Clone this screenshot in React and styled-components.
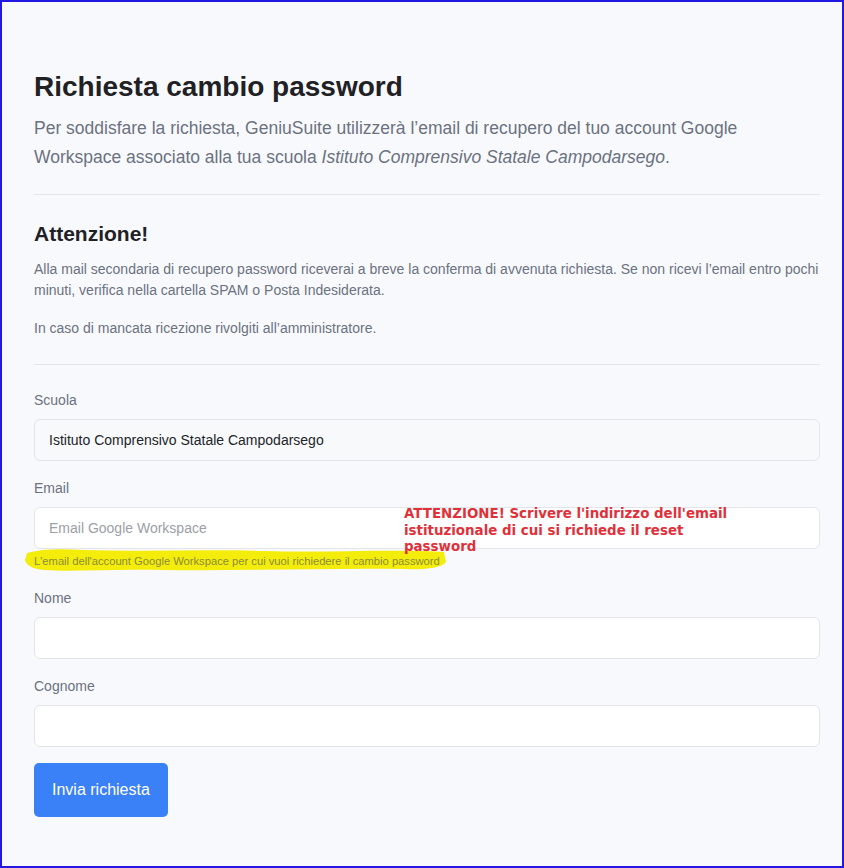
import React from "react";
import styled, { createGlobalStyle } from "styled-components";

const Global = createGlobalStyle`
  html, body { margin: 0; padding: 0; }
  body {
    background: #f8f9fd;
    font-family: "Liberation Sans", Arial, sans-serif;
  }
  * { box-sizing: border-box; }
`;

const Frame = styled.div`
  width: 844px;
  height: 868px;
  border: 2px solid #2317e4;
  background: #f8f9fd;
  padding: 68px 22px 0 32px;
  overflow: hidden;
`;

const Title = styled.h1`
  margin: 0;
  font-size: 28px;
  line-height: 34px;
  font-weight: 700;
  color: #1f2125;
`;

const Lead = styled.p`
  margin: 10px 0 0;
  font-size: 17.5px;
  line-height: 29px;
  color: #6b7280;
`;

const Divider = styled.hr`
  border: 0;
  border-top: 1px solid #e3e5ea;
  margin: ${(p) => p.$top}px 0 ${(p) => p.$bottom}px;
`;

const Heading = styled.h2`
  margin: 0;
  font-size: 21px;
  line-height: 26px;
  font-weight: 700;
  color: #1f2125;
`;

const Note = styled.p`
  margin: ${(p) => p.$top}px 0 0;
  font-size: 14px;
  line-height: 21px;
  color: #6b7280;
`;

const Form = styled.form`
  display: flex;
  flex-direction: column;
`;

const Field = styled.div`
  position: relative;
  display: flex;
  flex-direction: column;
  margin-bottom: ${(p) => p.$gap ?? 17}px;
`;

const Label = styled.label`
  font-size: 14px;
  line-height: 21px;
  color: #6b7280;
  margin-bottom: 8px;
`;

const Input = styled.input`
  width: 100%;
  height: 42px;
  border: 1px solid #e3e5ea;
  border-radius: 6px;
  background: ${(p) => (p.readOnly ? "#f8f9fb" : "#ffffff")};
  padding: 0 14px;
  font-family: "Liberation Sans", Arial, sans-serif;
  font-size: 14px;
  color: #212529;
  outline: none;
  &::placeholder { color: #9ca0a7; }
`;

const Help = styled.div`
  position: relative;
  margin-top: 2px;
  height: 16px;
`;

const HelpText = styled.span`
  position: relative;
  font-size: 11.2px;
  line-height: 16px;
  color: #8a8c3a;
  white-space: nowrap;
`;

const Marker = styled.svg`
  position: absolute;
  left: -10px;
  top: -5px;
  width: 424px;
  height: 27px;
  pointer-events: none;
`;

const Annotation = styled.div`
  position: absolute;
  left: 370px;
  top: 28px;
  width: 350px;
  font-family: "DejaVu Sans", Verdana, sans-serif;
  font-weight: 700;
  font-size: 13.4px;
  line-height: 16.5px;
  color: #e0313b;
  pointer-events: none;
`;

const Button = styled.button`
  align-self: flex-start;
  height: 54px;
  padding: 0 18px;
  border: 0;
  border-radius: 5px;
  background: #3a80f6;
  color: #ffffff;
  font-family: "Liberation Sans", Arial, sans-serif;
  font-size: 16px;
`;

export default function App() {
  return (
    <>
      <Global />
      <Frame>
        <Title>Richiesta cambio password</Title>
        <Lead>
          Per soddisfare la richiesta, GeniuSuite utilizzerà l’email di recupero del tuo account Google
          Workspace associato alla tua scuola <em>Istituto Comprensivo Statale Campodarsego</em>.
        </Lead>
        <Divider $top={22} $bottom={26} />
        <Heading>Attenzione!</Heading>
        <Note $top={12}>
          Alla mail secondaria di recupero password riceverai a breve la conferma di avvenuta richiesta. Se non ricevi l’email entro pochi
          minuti, verifica nella cartella SPAM o Posta Indesiderata.
        </Note>
        <Note $top={17}>In caso di mancata ricezione rivolgiti all’amministratore.</Note>
        <Divider $top={25} $bottom={25} />
        <Form onSubmit={(e) => e.preventDefault()}>
          <Field $gap={17}>
            <Label>Scuola</Label>
            <Input readOnly value="Istituto Comprensivo Statale Campodarsego" />
          </Field>
          <Field $gap={21}>
            <Label>Email</Label>
            <Input placeholder="Email Google Workspace" />
            <Help>
              <Marker viewBox="0 0 424 27" preserveAspectRatio="none">
                <path
                  d="M3 7 C20 2 40 3 60 4 C120 6 180 3 240 5 C300 7 360 3 420 6 L422 16 C418 22 400 24 380 23 C300 22 220 25 140 24 C90 23 50 26 20 24 C8 23 2 19 1 14 Z"
                  fill="#f4ec0b"
                />
              </Marker>
              <HelpText>L'email dell'account Google Workspace per cui vuoi richiedere il cambio password</HelpText>
            </Help>
            <Annotation>
              ATTENZIONE! Scrivere l'indirizzo dell'email istituzionale di cui si richiede il reset password
            </Annotation>
          </Field>
          <Field $gap={17}>
            <Label>Nome</Label>
            <Input />
          </Field>
          <Field $gap={16}>
            <Label>Cognome</Label>
            <Input />
          </Field>
          <Button type="submit">Invia richiesta</Button>
        </Form>
      </Frame>
    </>
  );
}
